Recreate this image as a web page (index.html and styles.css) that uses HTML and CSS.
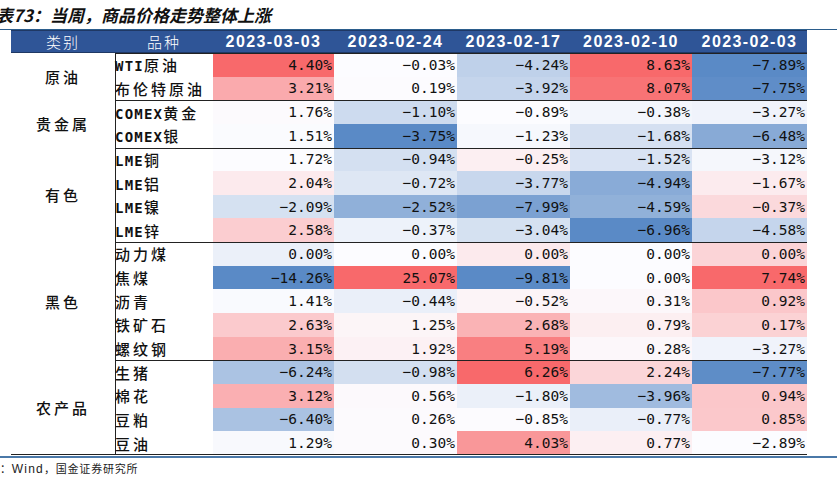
FILE: index.html
```html
<!DOCTYPE html>
<html lang="zh-CN">
<head>
<meta charset="utf-8">
<title>当周，商品价格走势整体上涨</title>
<link rel="stylesheet" href="styles.css">
</head>
<body>
<h1 class="title">表73：当周，商品价格走势整体上涨</h1>
<div class="rule-top"></div>
<table class="tbl">
  <colgroup>
    <col class="c-cat"><col class="c-name"><col class="c1"><col class="c2"><col class="c3"><col class="c4"><col class="c5">
  </colgroup>
  <thead>
    <tr>
      <th class="th-cn">类别</th>
      <th class="th-cn">品种</th>
      <th class="th-date">2023-03-03</th>
      <th class="th-date">2023-02-24</th>
      <th class="th-date">2023-02-17</th>
      <th class="th-date">2023-02-10</th>
      <th class="th-date">2023-02-03</th>
    </tr>
  </thead>
  <tbody>
    <tr class="g">
      <td class="cat" rowspan="2">原油</td>
      <td class="name"><span class="lat">WTI</span>原油</td>
      <td class="v">4.40%</td><td class="v">−0.03%</td><td class="v">−4.24%</td><td class="v">8.63%</td><td class="v">−7.89%</td>
    </tr>
    <tr>
      <td class="name">布伦特原油</td>
      <td class="v">3.21%</td><td class="v">0.19%</td><td class="v">−3.92%</td><td class="v">8.07%</td><td class="v">−7.75%</td>
    </tr>
    <tr class="g">
      <td class="cat" rowspan="2">贵金属</td>
      <td class="name"><span class="lat">COMEX</span>黄金</td>
      <td class="v">1.76%</td><td class="v">−1.10%</td><td class="v">−0.89%</td><td class="v">−0.38%</td><td class="v">−3.27%</td>
    </tr>
    <tr>
      <td class="name"><span class="lat">COMEX</span>银</td>
      <td class="v">1.51%</td><td class="v">−3.75%</td><td class="v">−1.23%</td><td class="v">−1.68%</td><td class="v">−6.48%</td>
    </tr>
    <tr class="g">
      <td class="cat" rowspan="4">有色</td>
      <td class="name"><span class="lat">LME</span>铜</td>
      <td class="v">1.72%</td><td class="v">−0.94%</td><td class="v">−0.25%</td><td class="v">−1.52%</td><td class="v">−3.12%</td>
    </tr>
    <tr>
      <td class="name"><span class="lat">LME</span>铝</td>
      <td class="v">2.04%</td><td class="v">−0.72%</td><td class="v">−3.77%</td><td class="v">−4.94%</td><td class="v">−1.67%</td>
    </tr>
    <tr>
      <td class="name"><span class="lat">LME</span>镍</td>
      <td class="v">−2.09%</td><td class="v">−2.52%</td><td class="v">−7.99%</td><td class="v">−4.59%</td><td class="v">−0.37%</td>
    </tr>
    <tr>
      <td class="name"><span class="lat">LME</span>锌</td>
      <td class="v">2.58%</td><td class="v">−0.37%</td><td class="v">−3.04%</td><td class="v">−6.96%</td><td class="v">−4.58%</td>
    </tr>
    <tr class="g">
      <td class="cat" rowspan="5">黑色</td>
      <td class="name">动力煤</td>
      <td class="v">0.00%</td><td class="v">0.00%</td><td class="v">0.00%</td><td class="v">0.00%</td><td class="v">0.00%</td>
    </tr>
    <tr>
      <td class="name">焦煤</td>
      <td class="v">−14.26%</td><td class="v">25.07%</td><td class="v">−9.81%</td><td class="v">0.00%</td><td class="v">7.74%</td>
    </tr>
    <tr>
      <td class="name">沥青</td>
      <td class="v">1.41%</td><td class="v">−0.44%</td><td class="v">−0.52%</td><td class="v">0.31%</td><td class="v">0.92%</td>
    </tr>
    <tr>
      <td class="name">铁矿石</td>
      <td class="v">2.63%</td><td class="v">1.25%</td><td class="v">2.68%</td><td class="v">0.79%</td><td class="v">0.17%</td>
    </tr>
    <tr>
      <td class="name">螺纹钢</td>
      <td class="v">3.15%</td><td class="v">1.92%</td><td class="v">5.19%</td><td class="v">0.28%</td><td class="v">−3.27%</td>
    </tr>
    <tr class="g">
      <td class="cat last" rowspan="4">农产品</td>
      <td class="name">生猪</td>
      <td class="v">−6.24%</td><td class="v">−0.98%</td><td class="v">6.26%</td><td class="v">2.24%</td><td class="v">−7.77%</td>
    </tr>
    <tr>
      <td class="name">棉花</td>
      <td class="v">3.12%</td><td class="v">0.56%</td><td class="v">−1.80%</td><td class="v">−3.96%</td><td class="v">0.94%</td>
    </tr>
    <tr>
      <td class="name">豆粕</td>
      <td class="v">−6.40%</td><td class="v">0.26%</td><td class="v">−0.85%</td><td class="v">−0.77%</td><td class="v">0.85%</td>
    </tr>
    <tr class="end">
      <td class="name">豆油</td>
      <td class="v">1.29%</td><td class="v">0.30%</td><td class="v">4.03%</td><td class="v">0.77%</td><td class="v">−2.89%</td>
    </tr>
  </tbody>
</table>
<p class="src">：<span class="src-lat">Wind</span>，国金证券研究所</p>
<script src="script.js"></script>
</body>
</html>
```

FILE: styles.css
```css
* { box-sizing: border-box; }

body {
  margin: 0;
  width: 837px;
  height: 479px;
  overflow: hidden;
  background: #fff;
  color: #111;
  font-family: "Noto Sans CJK SC", sans-serif;
}

.title {
  margin: 0 0 0 -4px;
  height: 29px;
  line-height: 30px;
  font-size: 17px;
  font-weight: 700;
  font-style: italic;
  color: #111;
  white-space: nowrap;
}

.rule-top {
  height: 1px;
  background: #2b5d8c;
}

.tbl {
  margin-left: 11px;
  width: 796px;
  border-collapse: collapse;
  table-layout: fixed;
}

.c-cat { width: 104px; }
.c-name { width: 98px; }
.c1 { width: 121px; }
.c2 { width: 123px; }
.c3 { width: 113px; }
.c4 { width: 122px; }
.c5 { width: 115px; }

.tbl th {
  height: 23px;
  padding: 0;
  background: #2f5597;
  color: #fff;
  text-align: center;
  white-space: nowrap;
  box-shadow: inset 0 1px #1f3864, inset 0 -1px #1f3864;
}

.th-cn {
  font-size: 15px;
  font-weight: 300;
  letter-spacing: 2px;
  padding-left: 2px;
  color: #dde2ef;
}

.th-date {
  font-family: "Liberation Sans", Arial, sans-serif;
  font-size: 16px;
  font-weight: 700;
  letter-spacing: 1.4px;
}

.tbl tbody tr { height: 23.65px; }

.tbl td {
  padding: 0;
  white-space: nowrap;
}

.cat {
  text-align: center;
  vertical-align: middle;
  font-size: 15px;
  font-weight: 500;
  letter-spacing: 3px;
  padding-left: 3px;
}

.cat.last { box-shadow: inset 0 -1px #222; }

.name {
  padding-left: 3px;
  font-size: 15px;
  font-weight: 500;
  letter-spacing: 3px;
  box-shadow: inset 1px 0 #222;
}

.lat {
  font-family: "DejaVu Sans Mono", monospace;
  font-size: 14px;
  font-weight: 700;
  letter-spacing: 1.2px;
}

.v {
  text-align: right;
  font-family: "DejaVu Sans Mono", monospace;
  font-size: 14.5px;
  color: #111;
}

.tbl td.v { padding-right: 2px; }

.g .name { box-shadow: inset 1px 0 #222, inset 0 1px #222; }
.g .v { box-shadow: inset 0 1px #222; }

.end .name { box-shadow: inset 1px 0 #222, inset 0 -1px #222; }
.end .v { box-shadow: inset 0 -1px #222; }

.src {
  margin: 1px 0 0;
  border-top: 2px solid #4a78a8;
  font-size: 11px;
  line-height: 21px;
  letter-spacing: 0.8px;
  color: #222;
  white-space: nowrap;
}

.src-lat {
  font-family: "Liberation Sans", Arial, sans-serif;
  font-size: 12px;
  letter-spacing: 1.2px;
}
```

FILE: script.js
```js
(function () {
  var LOW = [90, 138, 198], MID = [252, 252, 255], HIGH = [248, 105, 107];
  var rows = document.querySelectorAll('.tbl tbody tr');
  var cols = [];
  rows.forEach(function (tr) {
    tr.querySelectorAll('td.v').forEach(function (td, j) {
      var n = parseFloat(td.textContent.replace('\u2212', '-').replace('%', ''));
      (cols[j] = cols[j] || []).push({ td: td, n: n });
    });
  });
  function mix(a, b, t) {
    return 'rgb(' + a.map(function (x, i) { return Math.round(x + (b[i] - x) * t); }).join(',') + ')';
  }
  cols.forEach(function (list) {
    var s = list.map(function (c) { return c.n; }).sort(function (a, b) { return a - b; });
    var k = (s.length - 1) * 0.5, lo = Math.floor(k);
    var med = s[lo] + (s[Math.min(lo + 1, s.length - 1)] - s[lo]) * (k - lo);
    var min = s[0], max = s[s.length - 1];
    list.forEach(function (c) {
      var col;
      if (c.n >= med) col = mix(MID, HIGH, max > med ? (c.n - med) / (max - med) : 0);
      else col = mix(MID, LOW, (med - c.n) / (med - min));
      c.td.style.backgroundColor = col;
    });
  });
})();
```
